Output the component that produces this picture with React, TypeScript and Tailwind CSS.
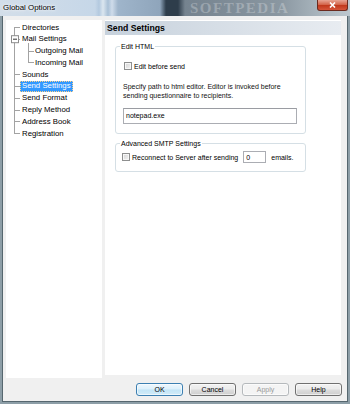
import React from 'react';

const treeItems = [
  { label: 'Directories', level: 0 },
  { label: 'Mail Settings', level: 0 },
  { label: 'Outgoing Mail', level: 1 },
  { label: 'Incoming Mail', level: 1 },
  { label: 'Sounds', level: 0 },
  { label: 'Send Settings', level: 0, selected: true },
  { label: 'Send Format', level: 0 },
  { label: 'Reply Method', level: 0 },
  { label: 'Address Book', level: 0 },
  { label: 'Registration', level: 0 },
];

const rowY = (i: number) => 7.4 + 11.8 * i;

const TreeLines: React.FC = () => (
  <svg className="absolute inset-0 pointer-events-none" width="96" height="358">
    <g stroke="#a3a3a3" strokeWidth="1" shapeRendering="crispEdges">
      <line x1="8.5" y1={rowY(0)} x2="8.5" y2={rowY(9)} />
      {[0, 1, 4, 5, 6, 7, 8, 9].map((i) => (
        <line key={i} x1="8.5" y1={rowY(i)} x2="14" y2={rowY(i)} />
      ))}
      <line x1="22.5" y1="23" x2="22.5" y2={rowY(3)} />
      <line x1="22.5" y1={rowY(2)} x2="28" y2={rowY(2)} />
      <line x1="22.5" y1={rowY(3)} x2="28" y2={rowY(3)} />
    </g>
    {/* collapse box */}
    <rect x="5.5" y="15.7" width="7" height="7" fill="#fff" stroke="#8c8c8c" strokeWidth="1" />
    <line x1="7" y1="19.2" x2="11" y2="19.2" stroke="#333" strokeWidth="1" />
  </svg>
);

const Checkbox: React.FC = () => (
  <span className="inline-block w-[8px] h-[8px] shrink-0 border border-[#8e8f8f] bg-[linear-gradient(135deg,#d4d4d4,#f4f4f4)] shadow-[inset_0_0_0_1px_#f7f7f7]" />
);

const Button: React.FC<{ label: string; kind?: 'default' | 'disabled' | 'normal' }> = ({ label, kind = 'normal' }) => {
  const cls =
    kind === 'default'
      ? 'border-[#3c7fb1] bg-[linear-gradient(180deg,#eef7fd_0%,#dcf0fb_48%,#c2e4f6_52%,#d2ecf9_100%)] text-black'
      : kind === 'disabled'
        ? 'border-[#b5b9bc] bg-[#f4f4f4] text-[#9a9a9a]'
        : 'border-[#707070] bg-[linear-gradient(180deg,#f2f2f2_0%,#ebebeb_48%,#dddddd_52%,#cfcfcf_100%)] text-black';
  return (
    <div
      className={`w-[47px] h-[13px] rounded-[3px] border flex items-center justify-center text-[7px] leading-none shadow-[inset_0_0_0_1px_rgba(255,255,255,0.6)] ${cls}`}
    >
      {label}
    </div>
  );
};

const App: React.FC = () => {
  return (
    <div className="relative w-[350px] h-[404px] overflow-hidden bg-[#8d9ea7] font-['Liberation_Sans',Arial,sans-serif] text-black">
      {/* Title bar */}
      <div className="relative h-[16px] bg-[linear-gradient(90deg,#d3dee9_0px,#c6d7e8_95px,#b3c9df_99px,#dbe6ef_103px,#a9c0d6_108px,#cfdcea_112px,#9fb5cb_118px,#8fa5bb_160px,#2e3d4b_166px,#2e3d4b_178px,#75838f_185px,#8a97a1_280px,#aab6be_320px,#bcc7ce_350px)]">
        <span className="absolute left-[3px] top-[3px] text-[7.9px] leading-[9px] [text-shadow:0_0_4px_#fff,0_0_2px_#fff]">
          Global Options
        </span>
        <span className="absolute left-[190px] top-0 font-['Liberation_Serif',serif] font-bold text-[15px] leading-[16px] tracking-[1.5px] text-white/25">
          SOFTPEDIA
        </span>
        {/* close button */}
        <div className="absolute right-[2px] top-0 w-[31px] h-[11px] rounded-b-[3px] border border-t-0 border-[#6b2a1e] bg-[linear-gradient(180deg,#e8a594_0%,#d4664c_45%,#c1391d_55%,#d5553a_100%)] flex items-center justify-center">
          <svg width="7" height="6" viewBox="0 0 7 6">
            <path d="M1 0.5 L6 5.5 M6 0.5 L1 5.5" stroke="#fff" strokeWidth="1.6" />
          </svg>
        </div>
      </div>

      {/* Client area */}
      <div className="mx-[2px] h-[386px] border-x border-b border-[#56676f] bg-[#f0f0f0] flex flex-col">
        <div className="flex items-start gap-[3px] pt-[4px] pl-[3px]">
          {/* Tree */}
          <div className="relative w-[96px] h-[358px] bg-white">
            <TreeLines />
            <div className="relative flex flex-col pt-[1.5px]">
              {treeItems.map((item) => (
                <div
                  key={item.label}
                  className={`h-[11.8px] flex items-center text-[7.8px] leading-none ${item.level ? 'pl-[29px]' : 'pl-[16px]'}`}
                >
                  {item.selected ? (
                    <span className="-ml-[2px] px-[2px] h-[10.5px] flex items-center bg-[#3399ff] text-white outline outline-1 outline-dotted outline-[#ffd28a] -outline-offset-1">
                      {item.label}
                    </span>
                  ) : (
                    <span>{item.label}</span>
                  )}
                </div>
              ))}
            </div>
          </div>

          {/* Settings page */}
          <div className="w-[236px] h-[355px] bg-white flex flex-col">
            <div className="h-[14px] mt-[1px] bg-gradient-to-r from-[#c6d1dc] to-[#e8ecf1] flex items-center pl-[2px] text-[8.7px] font-bold leading-none">
              Send Settings
            </div>

            <fieldset className="mt-[7px] ml-[10px] w-[191px] border border-[#d5dfe5] rounded-[3px] pl-[4px] pb-[9px]">
              <legend className="px-[1px] text-[7px] leading-[9px]">Edit HTML</legend>
              <div className="pl-[3px]">
                <div className="mt-[10.5px] h-[9px] flex items-center ml-[1px] gap-[2px] text-[7px] leading-none">
                  <Checkbox />
                  <span>Edit before send</span>
                </div>
                <p className="mt-[11.5px] text-[7px] leading-[9px] text-[#111]">
                  Specify path to html editor. Editor is invoked before
                  <br />
                  sending questionnaire to recipients.
                </p>
                <div className="mt-[7.5px] w-[174px] h-[16px] border border-[#abadb3] border-t-[#9a9ca2] flex items-center pl-[2px] text-[7px] leading-none">
                  notepad.exe
                </div>
              </div>
            </fieldset>

            <fieldset className="mt-[5px] ml-[10px] w-[191px] border border-[#d5dfe5] rounded-[3px] pl-[4px] pb-[8px]">
              <legend className="px-[1px] text-[7px] leading-[9px]">Advanced SMTP Settings</legend>
              <div className="mt-[3.5px] h-[12px] flex items-center pl-[2px] text-[7px] leading-none">
                <Checkbox />
                <span className="ml-[2px]">Reconnect to Server after sending</span>
                <div className="ml-[5px] w-[23px] h-[12px] border border-[#abadb3] flex items-center pl-[2px]">0</div>
                <span className="ml-[5px]">emails.</span>
              </div>
            </fieldset>
          </div>
        </div>

        {/* Dialog buttons */}
        <div className="mt-[5px] flex justify-end gap-[6px] pr-[5px]">
          <Button label="OK" kind="default" />
          <Button label="Cancel" />
          <Button label="Apply" kind="disabled" />
          <Button label="Help" />
        </div>
      </div>
    </div>
  );
};

export default App;
